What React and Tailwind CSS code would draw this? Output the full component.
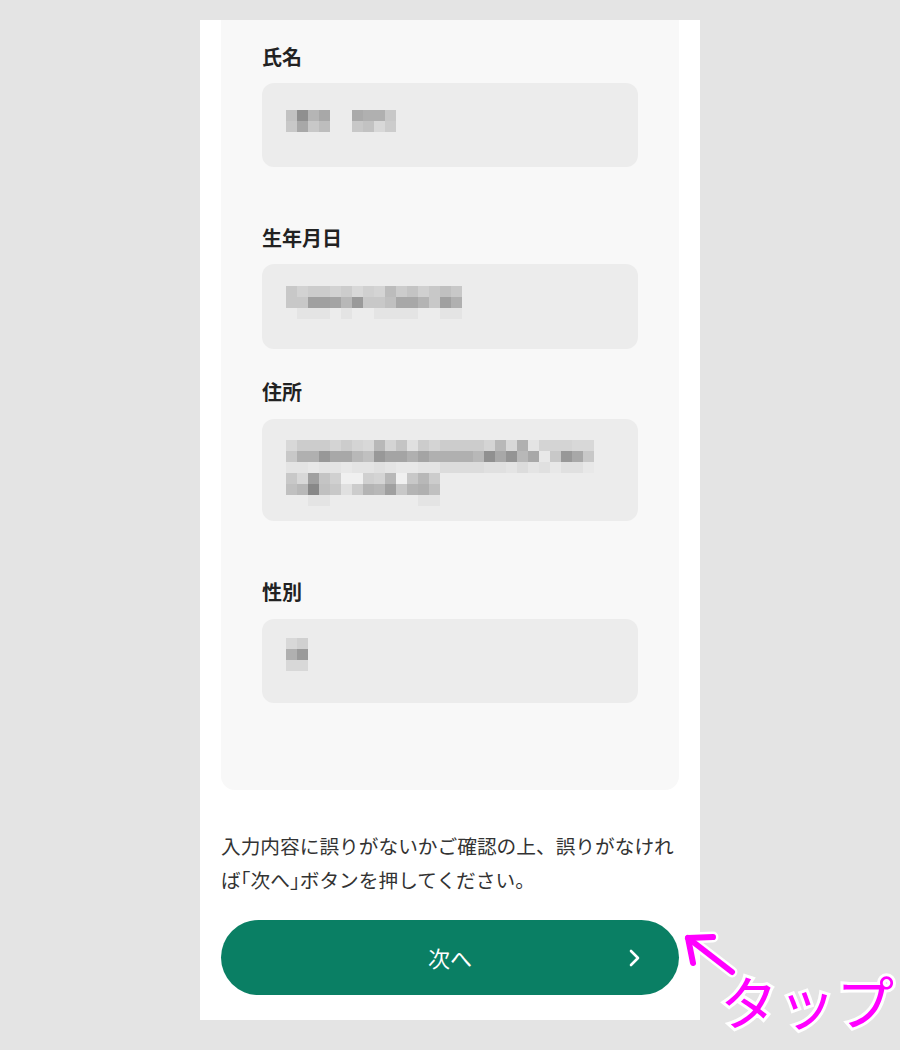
import React from "react";

function hex(v) {
  if (v === "-") return null;
  return "#" + v + v + v;
}
const rows = (arr) => arr.map((r) => r.split(",").map(hex));

const M1 = rows([
  "c2,8f,b5,a8,-,-,aa,b0,b0,c8",
  "c8,a8,c8,bd,-,-,c8,c2,d8,cc",
]);
const M2 = rows([
  "c8,d2,cc,cc,d2,cc,d8,d0,d4,bc,cc,c4,d0,c8,c0,c8",
  "c8,c8,a0,a0,a4,b8,9a,c8,c8,c0,a8,a8,b4,c8,a0,b0",
  "ec,e4,e4,e4,ec,e4,ec,ec,e4,e4,e4,e4,ec,ec,e4,e4",
]);
const M3 = rows([
  "d8,cc,cc,cc,d4,cc,d4,d8,b8,d4,c4,e0,cc,d4,cc,cc,cc,cc,d4,b8,d8,b0,e4,d4,d4,d4,d8,d8",
  "c8,b0,b0,98,a8,a8,b8,c0,98,a4,a4,b0,a4,b0,b0,b0,b0,b8,90,a8,94,b8,a8,e8,c8,98,a8,c8",
  "e4,e4,e8,e4,e4,e8,e4,e4,e0,e4,e8,e8,e4,e4,dc,dc,dc,dc,e0,e0,e4,dc,e4,e0,e8,e0,e0,e8",
  "c8,d8,a0,c4,d0,f0,f0,d0,d4,b8,f0,c8,b8,cc",
  "c0,b8,88,c0,c8,e0,cc,b4,b8,a0,c8,b4,b0,c0",
  "ec,ec,e4,e4,ec,ec,ec,ec,ec,ec,ec,ec,e4,e4",
]);
const M4 = rows(["d8,d0", "b0,9a", "d8,d8"]);

function Mosaic({ data }) {
  return (
    <div className="flex flex-col">
      {data.map((r, i) => (
        <div key={i} className="flex">
          {r.map((c, j) => (
            <div
              key={j}
              className="w-[11px] h-[11px]"
              style={{ backgroundColor: c || "transparent" }}
            />
          ))}
        </div>
      ))}
    </div>
  );
}

function Label({ children, className = "" }) {
  return (
    <div className={"text-[20px] leading-[28px] font-bold text-[#222] " + className}>
      {children}
    </div>
  );
}

export default function App() {
  return (
    <div
      className="relative min-h-[1050px] bg-[#e4e4e4] pt-[20px] flex justify-center"
      style={{ fontFamily: '"Noto Sans CJK JP", "Noto Sans", sans-serif' }}
    >
      <div className="w-[500px] h-[1000px] bg-white px-[21px] flex flex-col">
        <div className="bg-[#f8f8f8] rounded-b-[14px] px-[41px] pt-[23px] pb-[87px]">
          <Label>氏名</Label>
          <div className="mt-[12px] h-[84px] rounded-xl bg-[#ececec] pl-[24px] pt-[27px]">
            <Mosaic data={M1} />
          </div>

          <Label className="mt-[57px]">生年月日</Label>
          <div className="mt-[12px] h-[85px] rounded-xl bg-[#ececec] pl-[24px] pt-[22px]">
            <Mosaic data={M2} />
          </div>

          <Label className="mt-[29px]">住所</Label>
          <div className="mt-[13px] h-[102px] rounded-xl bg-[#ececec] pl-[24px] pt-[21px]">
            <Mosaic data={M3} />
          </div>

          <Label className="mt-[57px]">性別</Label>
          <div className="mt-[13px] h-[84px] rounded-xl bg-[#ececec] pl-[24px] pt-[19px]">
            <Mosaic data={M4} />
          </div>
        </div>

        <p className="mt-[39px] text-[19.7px] leading-[34px] text-[#333] whitespace-nowrap">
          入力内容に誤りがないかご確認の上、誤りがなけれ
          <br />
          ば<span className="[font-feature-settings:'halt']">「</span>次へ
          <span className="[font-feature-settings:'halt']">」</span>ボタンを押してください
          <span className="[font-feature-settings:'halt']">。</span>
        </p>

        <button className="relative mt-[23px] h-[75px] w-full rounded-full bg-[#0a7f64] flex items-center justify-center text-white text-[22px] font-normal">
          次へ
          <svg
            className="absolute right-[37px] top-1/2 -translate-y-1/2"
            width="14"
            height="20"
            viewBox="0 0 14 20"
            fill="none"
          >
            <path d="M3 3 L10 10 L3 17" stroke="white" strokeWidth="2.6" strokeLinecap="round" strokeLinejoin="round" />
          </svg>
        </button>
      </div>

      {/* annotation */}
      <svg className="absolute left-[676px] top-[925px]" width="70" height="60" viewBox="0 0 70 60" fill="none">
        <g stroke="white" strokeWidth="11" strokeLinecap="round" strokeLinejoin="round">
          <path d="M12 13 L56 47" />
          <path d="M37 12 L12 13 L17 38" />
        </g>
        <g stroke="#ff00ff" strokeWidth="6" strokeLinecap="round" strokeLinejoin="round">
          <path d="M12 13 L56 47" />
          <path d="M37 12 L12 13 L17 38" />
        </g>
      </svg>
      <div className="absolute left-[720px] top-[965px] text-[58px] leading-[70px] font-normal text-[#ff00ff] [paint-order:stroke_fill] [-webkit-text-stroke:6px_white]">
        タップ
      </div>
    </div>
  );
}
